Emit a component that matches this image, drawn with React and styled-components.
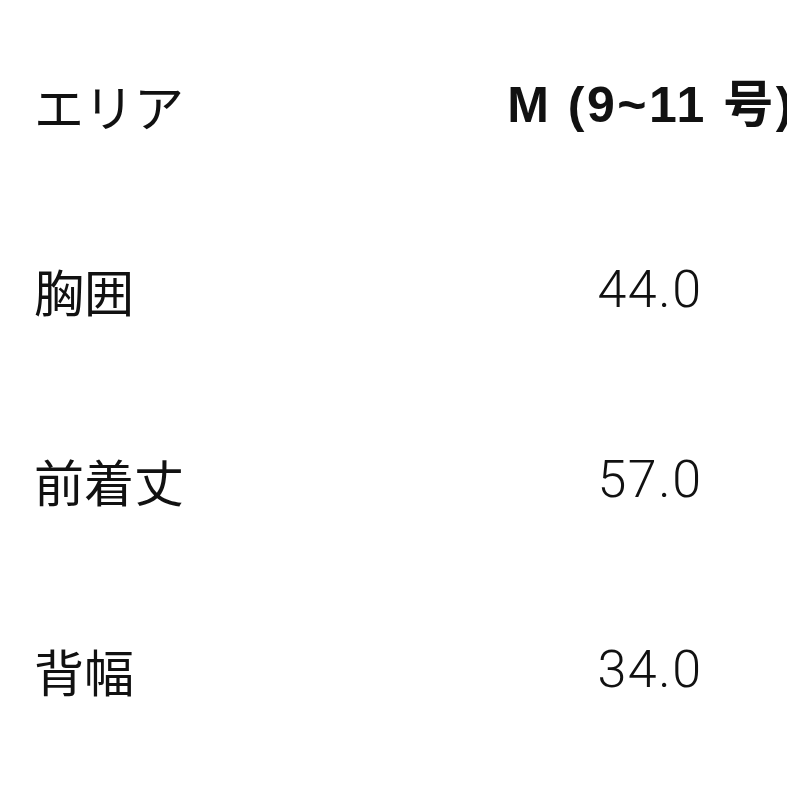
import React from "react";
import styled, { createGlobalStyle } from "styled-components";

const rows = [
  { label: "胸囲", value: "44.0" },
  { label: "前着丈", value: "57.0" },
  { label: "背幅", value: "34.0" },
];

export default function App() {
  return (
    <>
      <Global />
      <Table>
        <Row $header>
          <Label>エリア</Label>
          <Cell>
            <Head>M (9~11 号)</Head>
          </Cell>
        </Row>
        {rows.map((r) => (
          <Row key={r.label}>
            <Label>{r.label}</Label>
            <Cell>
              <Value>{r.value}</Value>
            </Cell>
          </Row>
        ))}
      </Table>
    </>
  );
}

const Global = createGlobalStyle`
  html, body {
    margin: 0;
    padding: 0;
    background: #fff;
    overflow: hidden;
  }
  body {
    width: 787px;
    height: 787px;
  }
`;

const Table = styled.div`
  width: 787px;
  padding: 15px 0 0 34px;
  box-sizing: border-box;
  display: flex;
  flex-direction: column;
`;

const Row = styled.div`
  display: grid;
  grid-template-columns: 1fr 274px;
  align-items: center;
  height: ${(p) => (p.$header ? "180px" : "190px")};
`;

const Label = styled.div`
  font-family: "Noto Sans CJK JP", sans-serif;
  font-size: 50px;
  line-height: 1;
  color: #111;
`;

const Cell = styled.div`
  display: flex;
  justify-content: center;
  white-space: nowrap;
`;

const Head = styled.span`
  font-family: "Liberation Sans", "Noto Sans CJK JP", sans-serif;
  font-weight: 700;
  font-size: 50px;
  letter-spacing: 2.5px;
  line-height: 1;
  color: #111;
  margin-left: 2px;
`;

const Value = styled.span`
  font-family: Roboto, "Liberation Sans", sans-serif;
  font-weight: 300;
  font-size: 52px;
  letter-spacing: 1.5px;
  line-height: 1;
  color: #111;
`;
